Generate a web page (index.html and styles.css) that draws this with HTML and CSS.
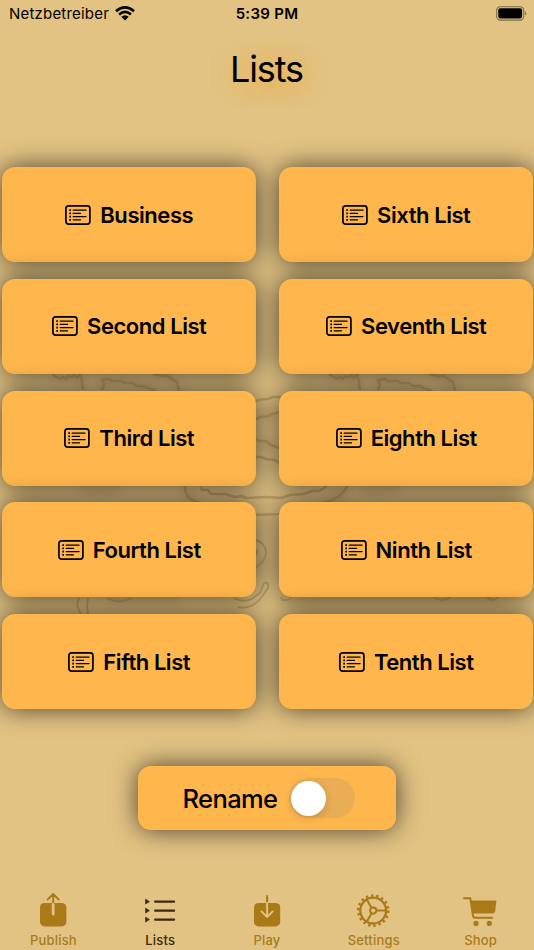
FILE: index.html
```html
<!DOCTYPE html>
<html lang="en">
<head>
<meta charset="utf-8">
<title>Lists</title>
<link rel="stylesheet" href="styles.css">
</head>
<body>
<svg width="0" height="0" class="defs">
  <symbol id="list" viewBox="0 0 26 20">
    <rect x=".9" y=".9" width="24" height="18.2" rx="2.6" fill="none" stroke="currentColor" stroke-width="1.7"/>
    <path d="M8.2 5.2H21M8.2 8.4H15.5M8.2 11.6H21M8.2 14.8H15.5" stroke="currentColor" stroke-width="1.3" stroke-linecap="round"/>
    <path d="M4.3 5.2H6M4.3 8.4H6M4.3 11.6H6M4.3 14.8H6" stroke="currentColor" stroke-width="1.7"/>
  </symbol>
</svg>
<div class="screen">
  <svg class="artwork" viewBox="0 0 534 950">
    <g class="halo">
      <path d="M53 374L60 379L80 375L83 391M102 390L103 380L135 383L157 391M153 374L171 378L179 390M330 374L340 379L356 375L360 391M378 390L379 380L425 391M430 374L448 379L455 391M256 418L278 412M256 439L278 448M185 487Q188 500 200 503M347 486Q342 499 322 503M80 487L100 490L120 487M361 487L375 490L400 487M256 567L267 560M107 599H180M281 599H498"/>
    </g>
    <path d="M52 374l8 5 3-2 3 2 2-3 4 1 2-2 3 3 3-4 2 8 1 8M102 390l2-5-2-5 7-1 3 2 9 0 4 2 8 0 4 3 7 0 5 3 5 1 4 3M153 374l10 2 5 0 5 4 4 2 2 9M329 374l8 5 3-2 3 2 2-3 4 1 2-2 3 3 3-4 2 8 1 8M378 390l2-5-2-5 7-1 3 2 9 0 4 2 8 0 4 3 7 0 5 3 5 1 4 3M429 374l10 2 5 0 5 4 4 2 2 9"/>
    <path d="M254 402q6-3 14-3l5-2 8 0M254 420l6-3 8-1 4-2 8-2M254 438l5 3 7 0 5 4 8 3M254 457l7 0 5 2 8 1 6 3M185 485q-1 15 16 18M348 485q-7 14-24 18M201 487l1 3 6 0 3 4 14 0 10 3 7-1 4 2 20-1 15 1 9-3 14-1 8-3 7 0 8-5M240 513q26 4 55-1"/>
    <path class="fine" d="M255 540q10 2 11 12q0 9-11 16M255 549q4 1 1 6M234 598q8 5 18 1l8-6 4-10q5-2 4 5l-7 10q-10 12-23 9M79 598l-2 7 4 10M88 598l-1 7 1 10M107 598q12 7 25 0M281 597l1 3 6 0 4-3M433 597q9 6 18 0M487 597q6 6 11 0"/>
  </svg>

  <header class="status">
    <div class="carrier"><span>Netzbetreiber</span>
      <svg class="wifi" viewBox="0 0 20 15"><path d="M1 5.2Q10-2.4 19 5.2M4.1 8.4Q10 3.4 15.9 8.4" fill="none" stroke="#000" stroke-width="2.6"/><path d="M6.3 10.7Q10 7.7 13.7 10.7L10 14.4Z"/></svg>
    </div>
    <time>5:39 PM</time>
    <div class="power"><svg viewBox="0 0 32 15"><rect x=".7" y=".7" width="27" height="13.4" rx="3.6" fill="none" stroke="#000" stroke-opacity=".45" stroke-width="1.1"/><rect x="2.3" y="2.3" width="23.8" height="10.2" rx="2"/><path d="M29 5Q31.5 7.4 29 9.8Z" fill-opacity=".45"/></svg></div>
  </header>

  <h1>Lists</h1>

  <main class="columns">
    <div class="column">
      <button class="card"><svg><use href="#list"/></svg><span>Business</span></button>
      <button class="card"><svg><use href="#list"/></svg><span>Second List</span></button>
      <button class="card"><svg><use href="#list"/></svg><span>Third List</span></button>
      <button class="card"><svg><use href="#list"/></svg><span>Fourth List</span></button>
      <button class="card"><svg><use href="#list"/></svg><span>Fifth List</span></button>
    </div>
    <div class="column">
      <button class="card"><svg><use href="#list"/></svg><span>Sixth List</span></button>
      <button class="card"><svg><use href="#list"/></svg><span>Seventh List</span></button>
      <button class="card"><svg><use href="#list"/></svg><span>Eighth List</span></button>
      <button class="card"><svg><use href="#list"/></svg><span>Ninth List</span></button>
      <button class="card"><svg><use href="#list"/></svg><span>Tenth List</span></button>
    </div>
  </main>

  <div class="rename"><span>Rename</span><div class="switch"><div class="knob"></div></div></div>

  <nav class="tabs">
    <a class="tab"><svg viewBox="0 0 36 36"><rect x="5" y="11" width="26.4" height="23.4" rx="4.5" fill="currentColor"/><path d="M18.2 2.2V12M12.7 7.5L18.2 2L23.7 7.5" fill="none" stroke="currentColor" stroke-width="1.9" stroke-linecap="round" stroke-linejoin="round"/><path d="M18.2 12.5V22" stroke="#e2c383" stroke-width="2.8" stroke-linecap="round"/></svg><span>Publish</span></a>
    <a class="tab active"><svg viewBox="0 0 36 36"><path d="M13.2 9.6H32M13.2 18.6H32M13.2 27.6H32" stroke="currentColor" stroke-width="2.4" stroke-linecap="round"/><path d="M3.6 7.2L7.4 9.6L3.6 12ZM3.6 16.2L7.4 18.6L3.6 21ZM3.6 25.2L7.4 27.6L3.6 30Z" fill="currentColor" stroke="currentColor" stroke-width=".7"/></svg><span>Lists</span></a>
    <a class="tab"><svg viewBox="0 0 36 36"><rect x="5" y="11" width="26.2" height="23.4" rx="4.5" fill="currentColor"/><path d="M18.1 4V11" stroke="currentColor" stroke-width="2" stroke-linecap="round"/><path d="M18.1 11V24M12.5 19.4L18.1 25L23.7 19.4" fill="none" stroke="#e2c383" stroke-width="1.9" stroke-linecap="round" stroke-linejoin="round"/></svg><span>Play</span></a>
    <a class="tab"><svg viewBox="0 0 36 36"><g fill="none" stroke="currentColor"><circle cx="17.2" cy="18.6" r="12.9" stroke-width="2.3"/><circle cx="17.2" cy="18.6" r="15" stroke-width="2.6" stroke-dasharray="2.3 2.936"/><circle cx="17.2" cy="18.6" r="3.1" stroke-width="1.9"/><path d="M20.3 18.6H30.2M15.6 15.9L10.7 7.4M15.6 21.3L10.7 29.8" stroke-width="2"/></g></svg><span>Settings</span></a>
    <a class="tab"><svg viewBox="0 0 36 36"><g transform="translate(-1 -.6)"><path d="M2 6.8H8.3L11 24.3Q11.3 26.4 13 26.4H30.2" fill="none" stroke="currentColor" stroke-width="2" stroke-linecap="round" stroke-linejoin="round"/><path d="M9 9.2H34.4L33.2 19.5Q32.8 22 30.3 22H11Z" fill="currentColor"/><circle cx="14" cy="32" r="2.6" fill="currentColor"/><circle cx="27.3" cy="32" r="2.6" fill="currentColor"/></g></svg><span>Shop</span></a>
  </nav>
</div>
</body>
</html>
```

FILE: styles.css
```css
* { box-sizing: border-box; }

body {
  margin: 0;
  background: #e2c383;
  color: #000;
  font-family: Inter, "Liberation Sans", sans-serif;
}

.defs { position: absolute; }

.screen {
  position: relative;
  isolation: isolate;
  width: 534px;
  height: 950px;
  overflow: hidden;
  display: flex;
  flex-direction: column;
}

.artwork {
  position: absolute;
  inset: 0;
  z-index: -1;
  fill: none;
  stroke: #c2a46a;
  stroke-width: 2.6;
  stroke-linejoin: round;
}

.artwork .fine { stroke-width: 1.8; }
.artwork .halo { stroke: #7b602e; stroke-opacity: .16; stroke-width: 9; filter: blur(5px); }

.status {
  height: 27px;
  padding: 0 7px 0 9px;
  display: grid;
  grid-template-columns: 1fr auto 1fr;
  align-items: center;
  font-size: 15px;
}

.carrier { display: flex; align-items: center; gap: 6px; letter-spacing: .2px; }
.wifi { width: 20px; height: 15px; margin-top: -1px; }
.status time { margin-left: -2px; font-weight: 600; letter-spacing: .3px; }
.power { display: flex; justify-content: flex-end; }
.power svg { width: 32px; height: 15px; margin-top: -1px; margin-right: -1px; }

h1 {
  margin: 19px 0 0;
  height: 46px;
  line-height: 46px;
  text-align: center;
  text-indent: -1px;
  font-size: 36px;
  font-weight: 400;
  letter-spacing: -1.1px;
  text-shadow: 4px 4px 26px rgba(255, 159, 28, .9);
}

.columns {
  margin-top: 75px;
  padding: 0 1.5px;
  display: grid;
  grid-template-columns: 1fr 1fr;
  column-gap: 23px;
}

.column { display: flex; flex-direction: column; gap: 16.7px; }

.card {
  height: 95.1px;
  padding: 0 0 0 1.5px;
  border: 0;
  border-radius: 13px;
  background: #ffb74d;
  box-shadow: 0 0 26px rgba(0, 0, 0, .68);
  display: flex;
  align-items: center;
  justify-content: center;
  gap: 9px;
  color: #000;
  font: 600 22px/1 Inter, "Liberation Sans", sans-serif;
  letter-spacing: -.45px;
}

.card svg { width: 26px; height: 20px; }

.rename {
  align-self: center;
  width: 258px;
  height: 64px;
  margin-top: 57px;
  border-radius: 13px;
  background: #ffb74d;
  box-shadow: 0 0 26px rgba(0, 0, 0, .68);
  display: flex;
  align-items: center;
  justify-content: center;
  gap: 11px;
  padding-left: 3px;
  font-size: 25.5px;
  font-weight: 550;
  letter-spacing: -.6px;
}

.switch {
  width: 66px;
  height: 40px;
  padding: 2.5px;
  border-radius: 20px;
  background: #e8ad55;
}

.knob {
  width: 35px;
  height: 35px;
  border-radius: 50%;
  background: #fff;
  box-shadow: 0 3px 8px rgba(0, 0, 0, .15);
}

.tabs {
  margin-top: auto;
  height: 58px;
  display: grid;
  grid-template-columns: repeat(5, 1fr);
}

.tab {
  display: flex;
  flex-direction: column;
  align-items: center;
  gap: 4px;
  color: #aa7a18;
  font-size: 13px;
  font-weight: 500;
  line-height: 17px;
  letter-spacing: .2px;
}

.tab svg { width: 36px; height: 36px; }
.tab.active { color: #3a290b; }
```
